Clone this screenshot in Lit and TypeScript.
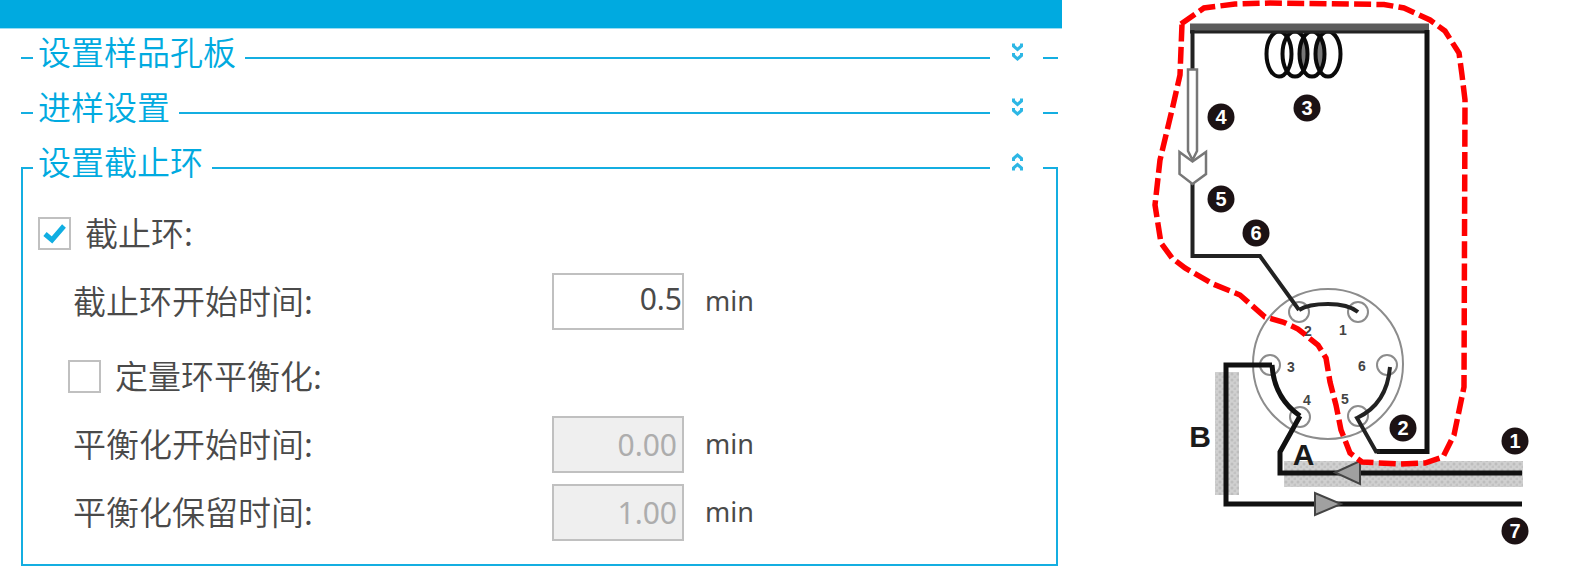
import { LitElement, html, css, svg } from "lit";
import { customElement, property, state } from "lit/decorators.js";

@customElement("group-header")
class GroupHeader extends LitElement {
  @property() heading = "";
  @property({ type: Boolean }) open = false;

  static styles = css`
    :host { display: block; position: relative; }
    .head {
      display: flex; align-items: flex-start; width: 100%; height: 55px;
      margin: 0; padding: 0; border: 0; background: none; text-align: left;
      color: #00aae0; cursor: pointer;
      font: 350 33px/42px "Noto Sans CJK SC", sans-serif;
    }
    .line { flex: 1; height: 2px; margin-top: 27px; background: #14aee1; }
    .start { flex: 0 0 12px; }
    .end { flex: 0 0 15px; }
    .title { padding: 0 9px 0 5px; white-space: nowrap; }
    .chevron { flex: none; width: 53px; height: 44px; }
    .chevron path { fill: none; stroke: #2db7e5; stroke-width: 3; }
    .up { transform: scaleY(-1); }
  `;

  render() {
    return html`<button class="head" aria-expanded=${this.open ? "true" : "false"}>
      <span class="line start"></span>
      <span class="title">${this.heading}</span>
      <span class="line"></span>
      <svg class="chevron ${this.open ? "up" : ""}" viewBox="0 0 53 44" aria-hidden="true">
        <path d="M23.500 13.500V16L27.500 19.500L31.500 16V13.500M23.500 23V25.500L27.500 29L31.500 25.500V23" />
      </svg>
      <span class="line end"></span>
    </button>`;
  }
}

@customElement("valve-diagram")
class ValveDiagram extends LitElement {
  static styles = css`
    :host { display: block; }
    svg { display: block; width: 100%; }
    .pipe { fill: none; stroke: #111; stroke-width: 5; }
    .thin { fill: none; stroke: #222; stroke-width: 4; }
    .ring { fill: none; stroke: #8c8c8c; stroke-width: 2; }
    .needle { fill: #fff; stroke: #777; stroke-width: 2.5; }
    .arrow { fill: #a0a0a0; stroke: #444; stroke-width: 2; }
    .coil { fill: none; stroke: #0a0a0a; stroke-width: 4; }
    .lens { fill: #777; }
    .loop { fill: none; stroke: #f00; stroke-width: 5.5; stroke-dasharray: 17 5.3; }
    .dot { fill: #1c1214; }
    text { font-family: "Liberation Sans", sans-serif; font-weight: 700; text-anchor: middle; }
    .num { fill: #fff; font-size: 20px; }
    .port { fill: #444; font-size: 14px; }
    .side { fill: #1a1a1a; font-size: 30px; }
  `;

  render() {
    const badges = [
      [1, 1515, 441], [2, 1403, 428], [3, 1307, 108], [4, 1221, 117],
      [5, 1221, 199], [6, 1256, 233], [7, 1515, 531],
    ];
    const ports = [
      [1, 1358, 312, 1343, 335], [2, 1299, 312, 1308, 336], [3, 1270, 365, 1291, 372],
      [4, 1300, 417, 1307, 405], [5, 1358, 416, 1345, 404], [6, 1387, 365, 1362, 371],
    ];
    return html`<svg viewBox="1062 0 526 569" role="img" aria-label="Valve diagram">
      <defs>
        <pattern id="grain" width="6" height="6" patternUnits="userSpaceOnUse">
          <rect width="6" height="6" fill="#d0d0d0" />
          <circle cx="2" cy="2" r="1.500" fill="#bdbdbd" />
          <circle cx="5" cy="5" r="1.500" fill="#c2c2c2" />
        </pattern>
      </defs>
      <rect x="1215" y="372" width="24" height="123" fill="url(#grain)" />
      <rect x="1284" y="461" width="239" height="26" fill="url(#grain)" />
      <circle class="ring" cx="1328" cy="364" r="75" />
      ${ports.map((p) => svg`<circle class="ring" cx=${p[1]} cy=${p[2]} r="10" />
        <text class="port" x=${p[3]} y=${p[4]}>${p[0]}</text>`)}
      <ellipse class="lens" cx="1303.500" cy="54" rx="5" ry="15" />
      <ellipse class="lens" cx="1320" cy="54" rx="5" ry="15" />
      ${[1279, 1295, 1312, 1328].map((x) => svg`<ellipse class="coil" cx=${x} cy="54" rx="12.500" ry="22.500" />`)}
      <path d="M1190 27.500H1429" stroke="#5c5c5c" stroke-width="8" />
      <path d="M1190 32H1429" stroke="#222" stroke-width="3" />
      <path class="thin" d="M1192.500 30V72M1192.500 182V256H1260L1299 310" />
      <path class="thin" d="M1299 310Q1308 304 1328 304Q1348 304 1358 312" />
      <path class="pipe" d="M1427 30V451.500H1377" />
      <path class="thin" d="M1380 451.500H1376L1357 418Q1387 404 1390 367" />
      <path class="pipe" d="M1272 365H1226V504H1522" />
      <path class="pipe" d="M1272 365Q1274 398 1300 416" />
      <path class="pipe" d="M1300 416L1280 452V473H1522" />
      <path class="needle" d="M1188 69.500H1197V151L1192.500 160L1188 151Z" />
      <path class="needle" d="M1179.500 152L1192.500 161.500L1206 152V174L1192.500 184L1179.500 174Z" />
      <path class="arrow" d="M1335 472.500L1360 461V484Z" />
      <path class="arrow" d="M1315 493V515L1341 504Z" />
      <text class="side" x="1200" y="447">B</text>
      <text class="side" x="1303.500" y="465">A</text>
      <path class="loop" d="M1181 24L1204 8L1235 4L1270 3L1384 4.500L1404 8L1430 20L1445 31L1459 53L1462 75L1465 100L1464 387L1454 435L1443 457L1425 463L1400 464L1362 462L1350 453L1341 430L1336 405L1330 382L1326 358L1318 345L1298 329L1283 322L1265 317L1240 295L1213 284L1185 268L1172 258L1161 243L1155 205L1160 160L1172 110L1180 75L1182 24" />
      ${badges.map((b) => svg`<circle class="dot" cx=${b[1]} cy=${b[2]} r="13.500" />
        <text class="num" x=${b[1]} y=${b[2] + 7}>${b[0]}</text>`)}
    </svg>`;
  }
}

@customElement("app-root")
class AppRoot extends LitElement {
  @state() private cutLoop = true;

  static styles = css`
    :host {
      display: flex; align-items: flex-start; background: #fff; color: #4a4a4a;
      font: 350 33px/42px "Noto Sans CJK SC", sans-serif;
    }
    .settings { flex: 1; min-width: 0; }
    .bar { height: 28px; background: #00aae0; border-bottom: 1px solid #99ddf3; }
    .groups { padding: 1px 4px 3px 21px; }
    .body {
      margin-top: -28px; padding: 32px 15px 18px;
      border: 2px solid #14aee1; border-top: 0;
    }
    .row { display: flex; align-items: center; height: 68px; }
    .row label { padding-bottom: 3px; }
    .nested { padding-left: 30px; margin-top: 7px; }
    .field { padding-left: 35px; }
    .name { flex: 0 0 479px; }
    .check {
      appearance: none; flex: none; box-sizing: border-box; width: 33px; height: 33px;
      margin: 0 14px 0 0; border: 2px solid #c0c0c0; background: #fff;
    }
    .tick { display: grid; flex: none; }
    .tick > * { grid-area: 1 / 1; }
    .mark { width: 33px; height: 33px; pointer-events: none; }
    .mark path { fill: none; stroke: #10aee2; stroke-width: 5; }
    .value {
      box-sizing: border-box; width: 132px; height: 57px; margin: 0 21px 0 0;
      padding: 0 0 6px; border: 2px solid #c0c0c0; border-radius: 0; background: #fff;
      color: #4a4a4a; text-align: right; font: 400 30px/42px "Noto Sans", sans-serif;
    }
    .value:disabled { padding: 0 5px 0 0; background: #efefef; color: #adadad; }
    .unit { font: 400 27px/42px "Noto Sans", sans-serif; }
    .diagram { flex: 0 0 526px; }
  `;

  private field(id: string, label: string, value: string, disabled: boolean) {
    return html`<div class="row field">
      <label class="name" for=${id}>${label}</label>
      <input class="value" id=${id} type="text" .value=${value} ?disabled=${disabled} />
      <span class="unit">min</span>
    </div>`;
  }

  private toggle(e: Event) {
    this.cutLoop = (e.target as HTMLInputElement).checked;
  }

  render() {
    return html`
      <main class="settings">
        <div class="bar"></div>
        <div class="groups">
          <group-header heading="设置样品孔板"></group-header>
          <group-header heading="进样设置"></group-header>
          <group-header heading="设置截止环" open></group-header>
          <div class="body">
            <div class="row">
              <span class="tick">
                <input class="check" id="cut" type="checkbox" .checked=${this.cutLoop} @change=${this.toggle} />
                ${this.cutLoop
                  ? html`<svg class="mark" viewBox="0 0 33 33" aria-hidden="true"><path d="M7 17L14 23L26 9" /></svg>`
                  : ""}
              </span>
              <label for="cut">截止环:</label>
            </div>
            ${this.field("cut-start", "截止环开始时间:", "0.5", false)}
            <div class="row nested">
              <input class="check" id="balance" type="checkbox" />
              <label for="balance">定量环平衡化:</label>
            </div>
            ${this.field("balance-start", "平衡化开始时间:", "0.00", true)}
            ${this.field("balance-hold", "平衡化保留时间:", "1.00", true)}
          </div>
        </div>
      </main>
      <valve-diagram class="diagram"></valve-diagram>
    `;
  }
}
